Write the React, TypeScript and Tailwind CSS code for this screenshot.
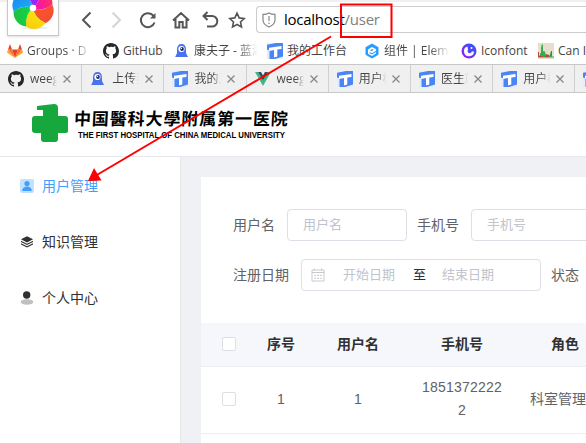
import React from "react";

const fade = "bg-clip-text text-transparent bg-linear-to-r from-[#444] from-70% to-transparent whitespace-nowrap overflow-hidden";

function GitHub() {
  return (
    <svg className="block size-4 shrink-0" viewBox="0 0 16 16" fill="#24292e">
      <path d="M8 0C3.58 0 0 3.58 0 8c0 3.54 2.29 6.53 5.47 7.59.4.07.55-.17.55-.38v-1.49c-2.23.48-2.7-.95-2.7-.95-.36-.92-.89-1.17-.89-1.17-.73-.5.05-.49.05-.49.81.06 1.23.83 1.23.83.72 1.23 1.88.87 2.34.67.07-.52.28-.88.51-1.08-1.78-.2-3.64-.89-3.64-3.95 0-.87.31-1.59.82-2.15-.08-.2-.36-1.02.08-2.12 0 0 .67-.21 2.2.82A7.6 7.6 0 0 1 8 3.87c.68 0 1.36.09 2 .27 1.53-1.04 2.2-.82 2.2-.82.44 1.1.16 1.92.08 2.12.51.56.82 1.27.82 2.15 0 3.07-1.87 3.75-3.65 3.95.29.25.54.73.54 1.48v2.2c0 .21.15.46.55.38A8 8 0 0 0 16 8c0-4.42-3.58-8-8-8z" />
    </svg>
  );
}

function GitLab() {
  return (
    <svg className="block size-4 shrink-0" viewBox="0 0 16 16">
      <path d="M8 15 5 6.5h6z" fill="#e24329" />
      <path d="M8 15 5 6.5H1z M8 15l3-8.500h4z" fill="#fc6d26" />
      <path d="M8 15 1 6.500 0 9.500z M8 15l7-8.500 1 3z" fill="#fca326" />
      <path d="M1 6.500 3 1l2 5.500z M15 6.500 13 1l-2 5.500z" fill="#e24329" />
    </svg>
  );
}

function Ghost() {
  return (
    <svg className="block size-4 shrink-0" viewBox="0 0 16 16">
      <path d="M3 6.500C3 3 4.500 1 7.500 1S12 3 12 6.500v3.500l2 4H1.200L3 10z" fill="#4a72ee" />
      <circle cx="7.500" cy="6" r="3.100" fill="#fff" />
      <circle cx="8" cy="6" r="1.900" fill="#173065" />
      <circle cx="7.400" cy="5.400" r=".6" fill="#fff" />
    </svg>
  );
}

function Desk() {
  return (
    <svg className="block size-4 shrink-0" viewBox="0 0 16 16">
      <path d="M0 0h16v16H0z" fill="#4a85f6" />
      <path d="M0 0h9L0 1.800z M0 6.500l2.500 1V16H0z M16 13.500V16H8z" fill="#e4edff" />
      <path d="M2 4.800 14.500 3v3l-4.200.6v6.900l-3.300.9V7.100L2 7.900z" fill="#fff" />
    </svg>
  );
}

function Vue() {
  return (
    <svg className="block size-4 shrink-0" viewBox="0 0 16 16">
      <path d="M0 1h3.500L8 9l4.500-8H16L8 15z" fill="#41b883" />
      <path d="M3.200 1H6l2 3.500L10 1h2.800L8 9.500z" fill="#35495e" />
    </svg>
  );
}

function ElementMark() {
  return (
    <svg className="block size-4 shrink-0" viewBox="0 0 16 16">
      <path d="M8 .5 14.500 4.200v7.600L8 15.500 1.500 11.800V4.200z" fill="#2b9cff" />
      <path d="M4 6.500 8 4l4 2.200v1.500L8 10.300 5.500 9v1.200L8 11.500l4-2.400v1.500L8 13l-4-2.300z" fill="#fff" />
      <path d="M6 7.200 8.200 6l1.600.8L7.500 8.300z" fill="#2b9cff" />
    </svg>
  );
}

function IconfontMark() {
  return (
    <svg className="block size-4 shrink-0" viewBox="0 0 16 16">
      <defs>
        <linearGradient id="ring" x1="0" x2="1" y1="1" y2="0">
          <stop offset="0" stopColor="#a51cf5" />
          <stop offset=".5" stopColor="#6637f8" />
          <stop offset="1" stopColor="#1764ff" />
        </linearGradient>
      </defs>
      <circle cx="8" cy="8" r="7.500" fill="url(#ring)" />
      <path d="M6.500 3.500a5 5 0 1 0 6.500 5H10L7 6.500z" fill="#fff" />
      <path d="M6.700 6.500h4v1.800a2 2 0 0 1-4 0z" fill="#4c4bfa" />
      <circle cx="10.500" cy="5" r="1" fill="#fff" />
    </svg>
  );
}

function CanMark() {
  return (
    <svg className="block size-4 shrink-0" viewBox="0 0 16 16">
      <path d="M0 0h16v16H0z" fill="#e7dfce" />
      <path d="M0 12.500h2V10h1V5l1-4 1 1v6l2 .500 1 4.500h2l1 .500 2-5 1 5h2v1H0z" fill="#34ad4d" />
      <path d="M0 9h1v4h4v1H0z M8 11l3 1v2H7z M13 8h1v5h-1z" fill="#b04b42" />
    </svg>
  );
}

const bookmarks = [
  { icon: <GitLab />, text: "Groups · D", box: "w-24", label: "w-[64px]", faded: true },
  { icon: <GitHub />, text: "GitHub", box: "w-[71px]", label: "w-[50px]", faded: false },
  { icon: <Ghost />, text: "康夫子 - 蓝湖", box: "w-[93px]", label: "w-[64px]", faded: true },
  { icon: <Desk />, text: "我的工作台", box: "w-[97px]", label: "w-[70px]", faded: false },
  { icon: <ElementMark />, text: "组件 | Elem", box: "w-[97px]", label: "w-[66px]", faded: true },
  { icon: <IconfontMark />, text: "Iconfont", box: "w-[77px]", label: "w-[56px]", faded: false },
  { icon: <CanMark />, text: "Can I", box: "w-24", label: "w-[64px]", faded: false },
];

const tabs = [
  { icon: <GitHub />, text: "weego" },
  { icon: <Ghost />, text: "上传我" },
  { icon: <Desk />, text: "我的工" },
  { icon: <Vue />, text: "weego" },
  { icon: <Desk />, text: "用户模" },
  { icon: <Desk />, text: "医生端" },
  { icon: <Desk />, text: "用户模" },
  { icon: <Desk />, text: "" },
];

const petals = [
  { from: "#ff5a22", to: "#f04a3a" },
  { from: "#ffe90a", to: "#f5c810" },
  { from: "#08e048", to: "#25b840" },
  { from: "#18b8f5", to: "#2080f0" },
  { from: "#7a40f0", to: "#c000f0" },
  { from: "#f500d0", to: "#ff3c50" },
];

function Wheel() {
  return (
    <svg className="block h-8 w-[50px]" viewBox="0 0 50 32">
      <ellipse cx="26" cy="28" rx="14" ry="1.500" fill="#eee" />
      <g transform="translate(25 8)">
        {petals.map((p, i) => (
          <g key={p.from} transform={`rotate(${5 + i * 60})`}>
            <linearGradient id={`petal${i}`} x1="0" y1="0" x2="1" y2="1">
              <stop offset="0" stopColor={p.from} />
              <stop offset="1" stopColor={p.to} />
            </linearGradient>
            <path d="M0 0Q10 3 19-5A14 14 0 0 1 13.800 14Q2.400 10.200 0 0z" fill={`url(#petal${i})`} />
          </g>
        ))}
        <circle r="3.300" fill="#fff" />
      </g>
    </svg>
  );
}

function Toolbar() {
  return (
    <div className="flex h-[37px]">
      <div className="ml-[7px] -mt-0.5 h-[36px] w-[52px] shrink-0 border border-t-0 border-[#c8c8c8] bg-white shadow-sm">
        <Wheel />
      </div>
      <svg className="block h-9 w-[197px] shrink-0" viewBox="59 2 197 36" fill="none" stroke="#555" strokeWidth="2">
        <path d="M90.500 12.500 83 20l7.500 7.500" />
        <path d="m112.500 12.500 7.500 7.500-7.500 7.500" stroke="#d5d5d5" />
        <path d="M154.500 22.500a7 7 0 1 1-1.800-7.400l1.800 1.900" />
        <path d="M155.500 13v5.500H150z" fill="#555" stroke="none" />
        <path d="M173 20.500 181 13l8 7.500M175.500 19v8.500h3.800V22h3.400v5.500h3.800V19" />
        <path d="M203.500 16H212a5.300 5.300 0 0 1 0 10.600h-5M207.500 12l-4 4 4 4" />
        <path d="m237 13.200 2.200 4.700 5 .6-3.700 3.500 1 5-4.500-2.500-4.500 2.500 1-5-3.700-3.500 5-.6z" strokeWidth="1.600" />
      </svg>
      <div className="mt-1 flex h-[27px] flex-1 items-center rounded-l-sm border border-r-0 border-[#ccc] pl-[5px]">
        <svg className="block h-4 w-[14px]" viewBox="0 0 14 16" fill="none" stroke="#858585" strokeWidth="1.200">
          <path d="M7 .9C5 2.200 3 2.400 1 2.400V8c0 3.500 2.500 5.500 6 7 3.500-1.500 6-3.500 6-7V2.400c-2 0-4-.2-6-1.500zM7 4v5M7 10.500V12" />
        </svg>
        <span className="ml-2 font-['Open_Sans',sans-serif] text-[15px] tracking-[-0.25px] text-black">localhost<span className="text-[#808080]">/user</span></span>
      </div>
    </div>
  );
}

function Calendar() {
  return (
    <svg className="block size-[14px]" viewBox="0 0 14 14" fill="none" stroke="#c0c4cc" strokeWidth=".9">
      <path d="M1 2h12v11H1zM1 4.500h12M3.500 .5v2M10.500 .5v2M3.200 7.500h2M6 7.500h2M8.800 7.500h2M3.200 10.300h2M6 10.300h2M8.800 10.300h2" />
    </svg>
  );
}

function Checkbox() {
  return <span className="block size-[14px] rounded-xs border border-[#dcdfe6] bg-white" />;
}

const columns = "grid grid-cols-[55px_50px_104px_104px_102px] items-center pb-0.5 text-center";

export default function App() {
  return (
    <div className="relative flex h-[443px] w-[586px] flex-col overflow-hidden bg-white font-['Liberation_Sans','Noto_Sans_CJK_SC',sans-serif] text-sm text-[#606266]">
      <div className="h-0.5 shrink-0 bg-[#f0f0f0]" />
      <Toolbar />
      <div className="flex h-[25px] shrink-0 items-center pb-0.5 pl-[7px] font-['Open_Sans','Noto_Sans_CJK_SC',sans-serif] text-xs text-[#444]">
        {bookmarks.map((b) => (
          <div key={b.text} className={`flex shrink-0 items-center gap-1 ${b.box}`}>
            {b.icon}
            <span className={`leading-5 whitespace-nowrap ${b.label} ${b.faded ? fade : ""}`}>{b.text}</span>
          </div>
        ))}
      </div>
      <div className="flex h-[29px] shrink-0 border-y border-[#c8c8c8] bg-[#f0f0f0] font-['Open_Sans','Noto_Sans_CJK_SC',sans-serif] text-xs">
        {tabs.map((t, i) => (
          <div key={i} className="flex w-[82.200px] shrink-0 items-center border-r border-[#d0d0d0] pl-2">
            {t.icon}
            <span className={`ml-1.5 w-[27px] leading-5 ${fade}`}>{t.text}</span>
            <svg className="ml-[6px] block size-2 shrink-0" viewBox="0 0 8 8" stroke="#888" strokeWidth="1.300">
              <path d="m.5.5 7 7m0-7-7 7" />
            </svg>
          </div>
        ))}
      </div>
      <header className="flex h-16 shrink-0 border-b border-[#e6e8ee] pl-8">
        <svg className="mt-[11px] block h-[38px] w-9" viewBox="0 0 36 38" fill="#16a83c">
          <path d="M5 2 22 0q4 0 4 4v8h7q3 0 3 3v12q0 2-3 2h-7v6q0 3-3 3H12q-3 0-3-3v-6H3q-3 0-3-3V15q0-3 3-3h8V6H5z" />
        </svg>
        <div className="mt-[13px] ml-1.5 flex flex-col text-black">
          <span className="font-['Noto_Sans_CJK_SC',sans-serif] text-[17px] leading-[24px] font-bold tracking-[0.9px] whitespace-nowrap -skew-x-3">中国醫科大學附属第一医院</span>
          <svg className="ml-1 block h-[10px] w-[208px]" viewBox="0 0 208 10">
            <text x="0" y="8" textLength="207" lengthAdjust="spacingAndGlyphs" fontSize="8.500" fontWeight="700">THE FIRST HOSPITAL OF CHINA MEDICAL UNIVERSITY</text>
          </svg>
        </div>
      </header>
      <div className="flex min-h-0 flex-1">
        <nav className="w-[181px] shrink-0 border-r border-[#e6e6e6] pt-px text-[#303133]">
          <div className="flex h-14 items-center gap-2 pl-5 text-[#409eff]">
            <svg className="block size-[14px]" viewBox="0 0 14 14" fill="#409eff">
              <rect width="14" height="14" rx="2" fill="#c3e0ff" />
              <circle cx="7" cy="4.500" r="2.600" />
              <path d="M2.200 12c0-3 2-4.500 4.800-4.500s4.800 1.500 4.800 4.500z" />
            </svg>
            用户管理
          </div>
          <div className="flex h-14 items-center gap-2 pl-5">
            <svg className="block size-[14px]" viewBox="0 0 14 14" fill="#303133">
              <path d="M7 1.200 13 4.300 7 7.400 1 4.300z" />
              <path d="m1 5.700 6 3 6-3v1.200l-6 3-6-3zM1 8.300l6 3 6-3v1.200l-6 3-6-3z" />
            </svg>
            知识管理
          </div>
          <div className="flex h-14 items-center gap-2 pl-5">
            <svg className="block size-[14px]" viewBox="0 0 14 14">
              <ellipse cx="7" cy="11" rx="6.300" ry="2.700" fill="#bfc1c1" />
              <circle cx="6.700" cy="4" r="3.700" fill="#303133" />
            </svg>
            个人中心
          </div>
        </nav>
        <main className="min-w-0 flex-1 overflow-hidden bg-[#f0f1f5] pt-5 pl-5">
          <div className="h-full w-[500px] bg-white pt-8">
            <div className="flex h-8 items-center pl-8">
              <span>用户名</span>
              <span className="ml-3 flex h-8 w-[120px] items-center rounded border border-[#dcdfe6] pl-[15px] text-[13px] text-[#c0c4cc]">用户名</span>
              <span className="ml-2.5">手机号</span>
              <span className="ml-3 flex h-8 w-[180px] items-center rounded border border-[#dcdfe6] pl-[15px] text-[13px] text-[#c0c4cc]">手机号</span>
            </div>
            <div className="mt-[18px] flex h-8 items-center pl-8">
              <span>注册日期</span>
              <div className="ml-3 flex h-8 w-60 items-center rounded border border-[#dcdfe6] pl-[9px] text-[13px] text-[#c0c4cc]">
                <Calendar />
                <span className="ml-[18px]">开始日期</span>
                <span className="ml-[18px] text-[#303133]">至</span>
                <span className="ml-4">结束日期</span>
              </div>
              <span className="ml-2.5">状态</span>
            </div>
            <div className={`mt-8 h-11 border-b border-[#ebeef5] bg-[#f5f7fa] font-bold text-[#303133] ${columns}`}>
              <div className="pl-[21px]"><Checkbox /></div>
              <div>序号</div><div>用户名</div><div>手机号</div><div>角色</div>
            </div>
            <div className={`h-[67px] border-b border-[#ebeef5] ${columns}`}>
              <div className="pl-[21px]"><Checkbox /></div>
              <div>1</div><div>1</div>
              <div className="px-2.5 leading-[23px] tracking-[0.22px] break-all">18513722222</div>
              <div className="whitespace-nowrap">科室管理员</div>
            </div>
          </div>
        </main>
      </div>
      <svg className="pointer-events-none absolute inset-0 h-[443px] w-[586px]" viewBox="0 0 586 443" fill="none" stroke="#f00">
        <path d="M341 4.500h50.500V37H341z" strokeWidth="2" />
        <path d="M331 36.500 96 175.500" strokeWidth="2" />
        <path d="m88 181 6-13 7.500 12.500z" fill="#f00" stroke="none" />
      </svg>
    </div>
  );
}
